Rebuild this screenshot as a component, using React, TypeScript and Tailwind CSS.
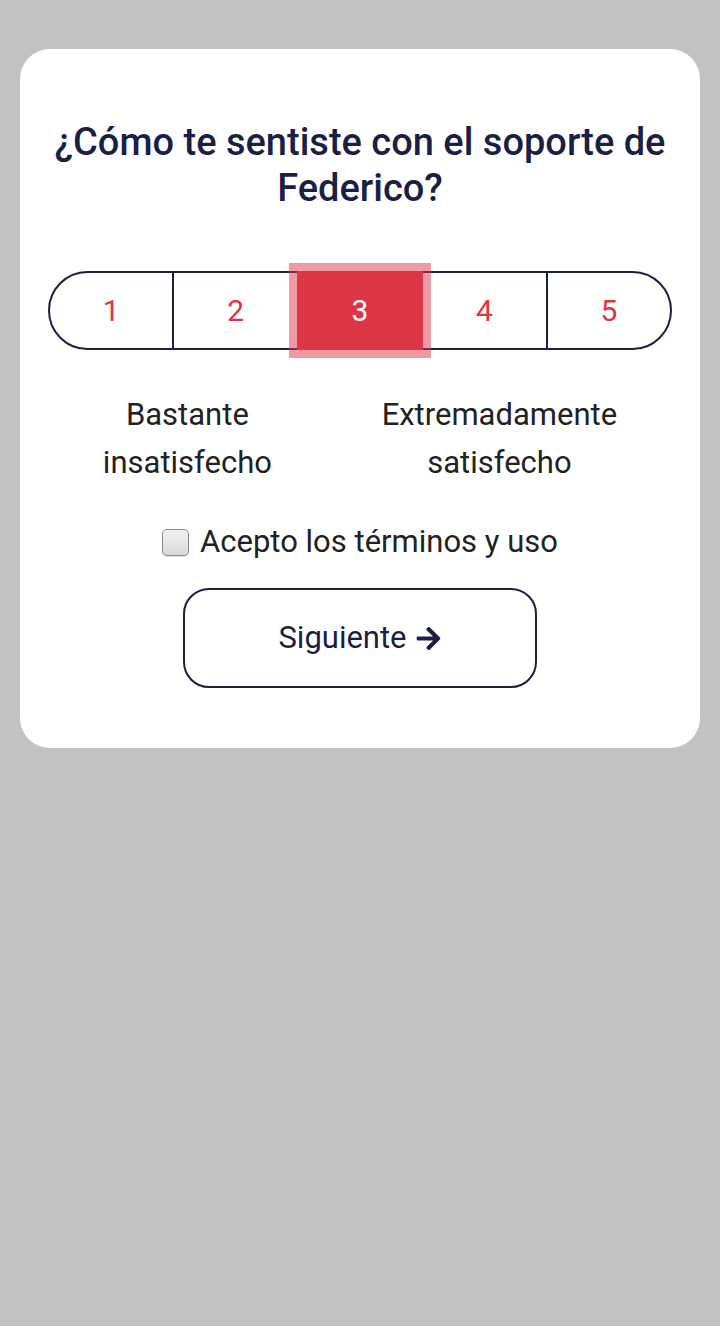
import { useState } from 'react';
import { FaArrowRight } from 'react-icons/fa';

const SCORES = [1, 2, 3, 4, 5];

// Encuesta de satisfacción — una tarjeta con la escala 1..5 y el botón siguiente.
export default function App() {
  const [score, setScore] = useState(3);
  const [accept, setAccept] = useState(false);

  return (
    <div
      className="min-h-[1326px] w-full bg-[#c2c2c2] px-5 pt-[49px]"
      style={{ fontFamily: 'Roboto, "Noto Sans", sans-serif' }}
    >
      <div className="flex flex-col items-center rounded-[30px] bg-white px-7 pt-[70px] pb-[60px]">
        <h1 className="text-center text-[38px] leading-[46px] font-medium text-[#1b1f45]">
          ¿Cómo te sentiste con el soporte de Federico?
        </h1>

        <div className="mt-[60px] flex h-[79px] w-full">
          {SCORES.map((n, i) => {
            const on = n === score;
            return (
              <div
                key={n}
                onClick={() => setScore(n)}
                className={
                  'relative flex flex-1 cursor-pointer items-center justify-center border-2 text-[30px] ' +
                  (i > 0 ? '-ml-[2px] ' : '') +
                  (i === 0 ? 'rounded-l-[40px] ' : '') +
                  (i === SCORES.length - 1 ? 'rounded-r-[40px] ' : '') +
                  (on
                    ? 'z-10 border-[#dc3545] bg-[#dc3545] text-white ring-8 ring-[rgba(220,53,69,0.5)]'
                    : 'border-[#1b1f45] bg-white text-[#dc3545]')
                }
              >
                {n}
              </div>
            );
          })}
        </div>

        <div className="mt-[41px] flex w-full justify-around text-center text-[31px] leading-[48px] text-[#222]">
          <div>
            Bastante
            <br />
            insatisfecho
          </div>
          <div>
            Extremadamente
            <br />
            satisfecho
          </div>
        </div>

        <label className="mt-[35px] flex cursor-pointer items-center gap-[11px] text-[31px] leading-[40px] text-[#222]">
          <input
            type="checkbox"
            checked={accept}
            onChange={(e) => setAccept(e.target.checked)}
            className="h-[27px] w-[27px] appearance-none rounded-[5px] border border-[#8a8a8a] bg-gradient-to-b from-[#f2f2f2] to-[#d9d9d9] shadow-[0_1px_1px_rgba(0,0,0,0.15)] checked:bg-[#1b1f45]"
          />
          Acepto los términos y uso
        </label>

        <button className="mt-[26px] flex h-[100px] w-[354px] items-center justify-center gap-2 rounded-[26px] border-2 border-[#1b1f45] bg-white text-[31px] text-[#1b1f45]">
          Siguiente
          <FaArrowRight size={27} />
        </button>
      </div>
    </div>
  );
}
